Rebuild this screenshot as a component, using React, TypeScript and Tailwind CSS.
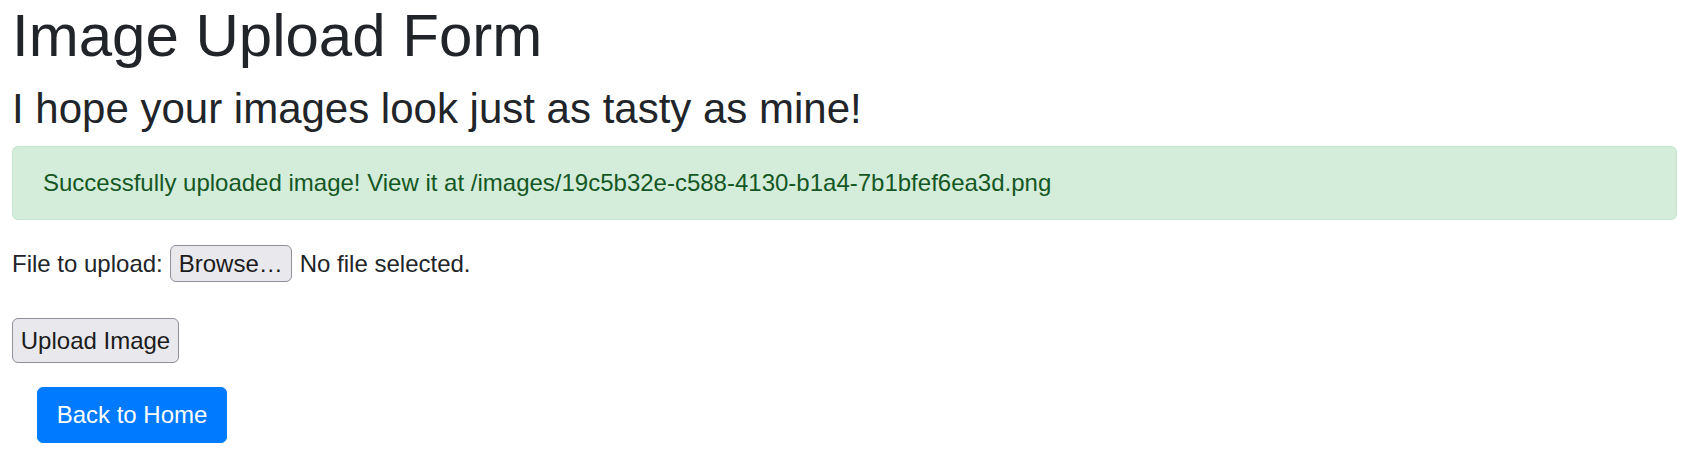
import React from 'react';

const imagePath = '/images/19c5b32e-c588-4130-b1a4-7b1bfef6ea3d.png';

export default function App() {
  return (
    <div className="min-h-screen bg-white pl-[12px] pr-[18px] font-['Liberation_Sans',Arial,sans-serif] text-[#212529]">
      {/* Page headings */}
      <h1 className="text-[60px] leading-[72px] font-normal mb-[12px]">Image Upload Form</h1>
      <h3 className="text-[42px] leading-[50px] font-normal mb-[12px]">
        I hope your images look just as tasty as mine!
      </h3>

      {/* Success alert */}
      <div className="rounded-[6px] border border-[#c3e6cb] bg-[#d4edda] px-[30px] py-[18px] text-[24px] leading-[36px] text-[#155724]">
        Successfully uploaded image! View it at {imagePath}
      </div>

      {/* Upload form */}
      <form className="text-[24px]" onSubmit={(e) => e.preventDefault()}>
        <div className="mt-[25px] flex h-[37px] items-center leading-[37px]">
          <label>File to upload:</label>
          <button
            type="button"
            className="ml-[7px] h-[37px] w-[122px] rounded-[6px] border border-[#8f8f9d] bg-[#e9e9ed] text-center text-[24px] leading-[35px] text-[#1b1b1b]"
          >
            Browse…
          </button>
          <span className="ml-[8px]">No file selected.</span>
        </div>

        <button
          type="submit"
          className="mt-[36px] block h-[45px] w-[167px] rounded-[6px] border border-[#8f8f9d] bg-[#e9e9ed] text-center text-[24px] leading-[43px] text-[#1b1b1b]"
        >
          Upload Image
        </button>
      </form>

      <a
        href="#"
        className="ml-[25px] mt-[24px] flex h-[56px] w-[190px] items-center justify-center rounded-[6px] border border-[#007bff] bg-[#007bff] text-[24px] text-white"
      >
        Back to Home
      </a>
    </div>
  );
}
